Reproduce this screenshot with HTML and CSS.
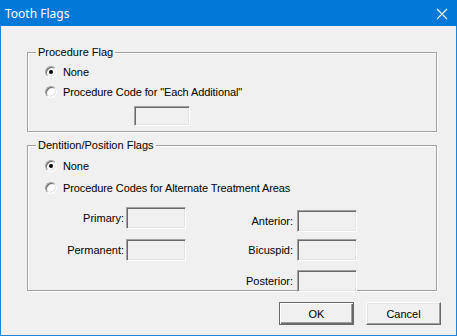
FILE: index.html
```html
<!DOCTYPE html>
<html>
<head>
	<meta charset="utf-8">
	<title>Tooth Flags</title>
	<link rel="stylesheet" href="styles.css">
</head>
<body>
	<div class="window">
		<div class="titlebar">
			<span class="title">Tooth Flags</span>
			<span class="close">
				<svg width="12" height="12" viewBox="0 0 12 12"><path d="M1 1 L11 11 M11 1 L1 11" stroke="#fff" stroke-width="1.1" fill="none"/></svg>
			</span>
		</div>

		<div class="content">
			<div class="group g1">
				<span class="legend">Procedure Flag</span>
				<div class="row first">
					<span class="radio checked"></span>
					<label>None</label>
				</div>
				<div class="row">
					<span class="radio"></span>
					<label>Procedure Code for "Each Additional"</label>
				</div>
				<div class="edit-row">
					<span class="edit"></span>
				</div>
			</div>

			<div class="group g2">
				<span class="legend">Dentition/Position Flags</span>
				<div class="row first">
					<span class="radio checked"></span>
					<label>None</label>
				</div>
				<div class="row second">
					<span class="radio"></span>
					<label>Procedure Codes for Alternate Treatment Areas</label>
				</div>
				<div class="fields">
					<div class="col left">
						<div class="field f-primary"><label>Primary:</label><span class="edit"></span></div>
						<div class="field f-permanent"><label>Permanent:</label><span class="edit"></span></div>
					</div>
					<div class="col right">
						<div class="field f-anterior"><label>Anterior:</label><span class="edit"></span></div>
						<div class="field f-bicuspid"><label>Bicuspid:</label><span class="edit"></span></div>
						<div class="field f-posterior"><label>Posterior:</label><span class="edit"></span></div>
					</div>
				</div>
			</div>

			<div class="buttons">
				<button class="btn default">OK</button>
				<button class="btn">Cancel</button>
			</div>
		</div>
	</div>
</body>
</html>
```

FILE: styles.css
```css
body, html {
	margin: 0;
	padding: 0;
}

body {
	background: #f0f0f0;
	font-family: "Liberation Sans", Arial, sans-serif;
	font-size: 11px;
	color: #000;
}

.window {
	box-sizing: border-box;
	width: 457px;
	height: 336px;
	border: 1px solid #1c84d9;
	border-top: 0;
	background: #f0f0f0;
}

.titlebar {
	display: flex;
	align-items: center;
	justify-content: space-between;
	height: 26px;
	margin: 0 -1px;
	padding: 0 9px 0 5px;
	background: #0078d7;
	color: #fff;
	font-family: "Noto Sans", sans-serif;
	font-size: 12px;
}

.close {
	display: flex;
	width: 12px;
	height: 12px;
	margin-top: 1px;
}

.content {
	padding: 26px 19px 0 26px;
}

/* etched group box */
.group {
	box-sizing: border-box;
	width: 410px;
	border: 1px solid #a0a0a0;
	box-shadow: inset 1px 1px #fff, 1px 1px #fff;
	padding: 0 0 0 17px;
}

.g1 {
	height: 80px;
}

.g2 {
	height: 146px;
	margin-top: 13px;
}

.legend {
	display: block;
	width: max-content;
	height: 14px;
	line-height: 14px;
	margin: -8px 0 0 -9px;
	padding: 0 2px;
	background: #f0f0f0;
}

.row {
	display: flex;
	align-items: center;
	height: 20px;
	letter-spacing: -0.1px;
}

.row.first {
	margin-top: 3px;
}

.g2 .row.first {
	margin-top: 4px;
}

.g2 .row.second {
	margin-top: 2px;
}

.row label {
	margin-left: 6px;
}

.radio {
	box-sizing: border-box;
	position: relative;
	width: 12px;
	height: 12px;
	border-radius: 50%;
	background: #fff;
	border: 1px solid;
	border-color: #a0a0a0 #ffffff #ffffff #a0a0a0;
	box-shadow: inset 1px 1px #696969, inset -1px -1px #e3e3e3;
}

.radio.checked::after {
	content: "";
	position: absolute;
	left: 3px;
	top: 3px;
	width: 4px;
	height: 4px;
	border-radius: 50%;
	background: #000;
}

/* sunken edit box */
.edit {
	display: block;
	box-sizing: border-box;
	width: 56px;
	height: 20px;
	background: #f0f0f0;
	border: 1px solid;
	border-color: #a0a0a0 #ffffff #ffffff #a0a0a0;
	box-shadow: inset 1px 1px #696969, inset -1px -1px #e3e3e3;
}

.edit-row {
	margin: 4px 0 0 89px;
}

.fields {
	display: flex;
}

.field {
	display: flex;
	align-items: center;
}

.field label {
	text-align: right;
	margin-right: 2px;
}

.field .edit {
	width: 60px;
	height: 22px;
}

.col.left label {
	width: 79px;
}

.col.right {
	margin-left: 45px;
}

.col.right label {
	width: 62px;
	margin-right: 4px;
}

.f-primary {
	margin-top: 9px;
}

.f-permanent {
	margin-top: 10px;
}

.f-anterior {
	margin-top: 12px;
}

.f-bicuspid {
	margin-top: 7px;
}

.f-posterior {
	margin-top: 9px;
}

.buttons {
	display: flex;
	justify-content: flex-end;
	gap: 12px;
	margin: 11px -4px 0 0;
}

.btn {
	box-sizing: border-box;
	width: 75px;
	height: 23px;
	padding: 0;
	margin: 0;
	font-family: "Liberation Sans", Arial, sans-serif;
	font-size: 11px;
	color: #000;
	background: #f0f0f0;
	border: 1px solid;
	border-color: #ffffff #696969 #696969 #ffffff;
	box-shadow: inset -1px -1px #a0a0a0, inset 1px 1px #e3e3e3;
}

.btn.default {
	border-color: #696969;
	box-shadow: inset 1px 1px #fff, inset -1px -1px #696969, inset -2px -2px #a0a0a0;
}
```
